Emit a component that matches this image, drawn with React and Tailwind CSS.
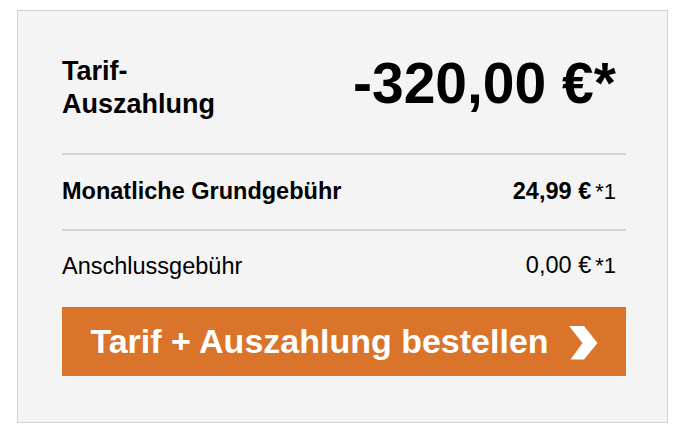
const font = { fontFamily: '"Liberation Sans", Arial, sans-serif' };

function PriceRow({ label, value, bold = false, className = "" }) {
  return (
    <div className={`flex justify-between items-center pr-[10px] text-[23.5px] text-black ${className}`}>
      <span className={bold ? "font-bold" : ""}>{label}</span>
      <span>
        <span className={bold ? "font-bold" : ""}>{value}</span>
        <span className="ml-[4px] text-[22px]">*1</span>
      </span>
    </div>
  );
}

function Chevron() {
  return (
    <svg width="29" height="34" viewBox="0 0 29 34" className="shrink-0 mt-[2px]">
      <polygon points="0,0 15,0 28.5,17 15,33.5 1.5,33.5 13.5,17" fill="#fff" />
    </svg>
  );
}

export default function App() {
  return (
    <div className="bg-white w-[692px] h-[446px] pt-[10px] pl-[17px]" style={font}>
      <div className="w-[651px] h-[413px] bg-[#f4f4f4] border border-[#d2d2d2] pl-[44px] pr-[41px] pt-[44px]">
        <div className="flex justify-between items-start pb-[32px] border-b-2 border-[#d4d4d6]">
          <div className="text-[27px] leading-[33px] font-bold text-black">
            Tarif-
            <br />
            Auszahlung
          </div>
          <div className="text-[57px] leading-none font-bold text-black pr-[10px]">
            -320,00 €*
          </div>
        </div>

        <PriceRow
          label="Monatliche Grundgebühr"
          value="24,99 €"
          bold
          className="h-[76px] border-b-2 border-[#d4d4d6]"
        />
        <PriceRow label="Anschlussgebühr" value="0,00 €" className="pt-[22px] leading-[24px]" />

        <button className="mt-[29px] w-full h-[69px] bg-[#da742a] flex items-center justify-center gap-[20px] text-white text-[34px] font-bold">
          <span>Tarif + Auszahlung bestellen</span>
          <Chevron />
        </button>
      </div>
    </div>
  );
}
